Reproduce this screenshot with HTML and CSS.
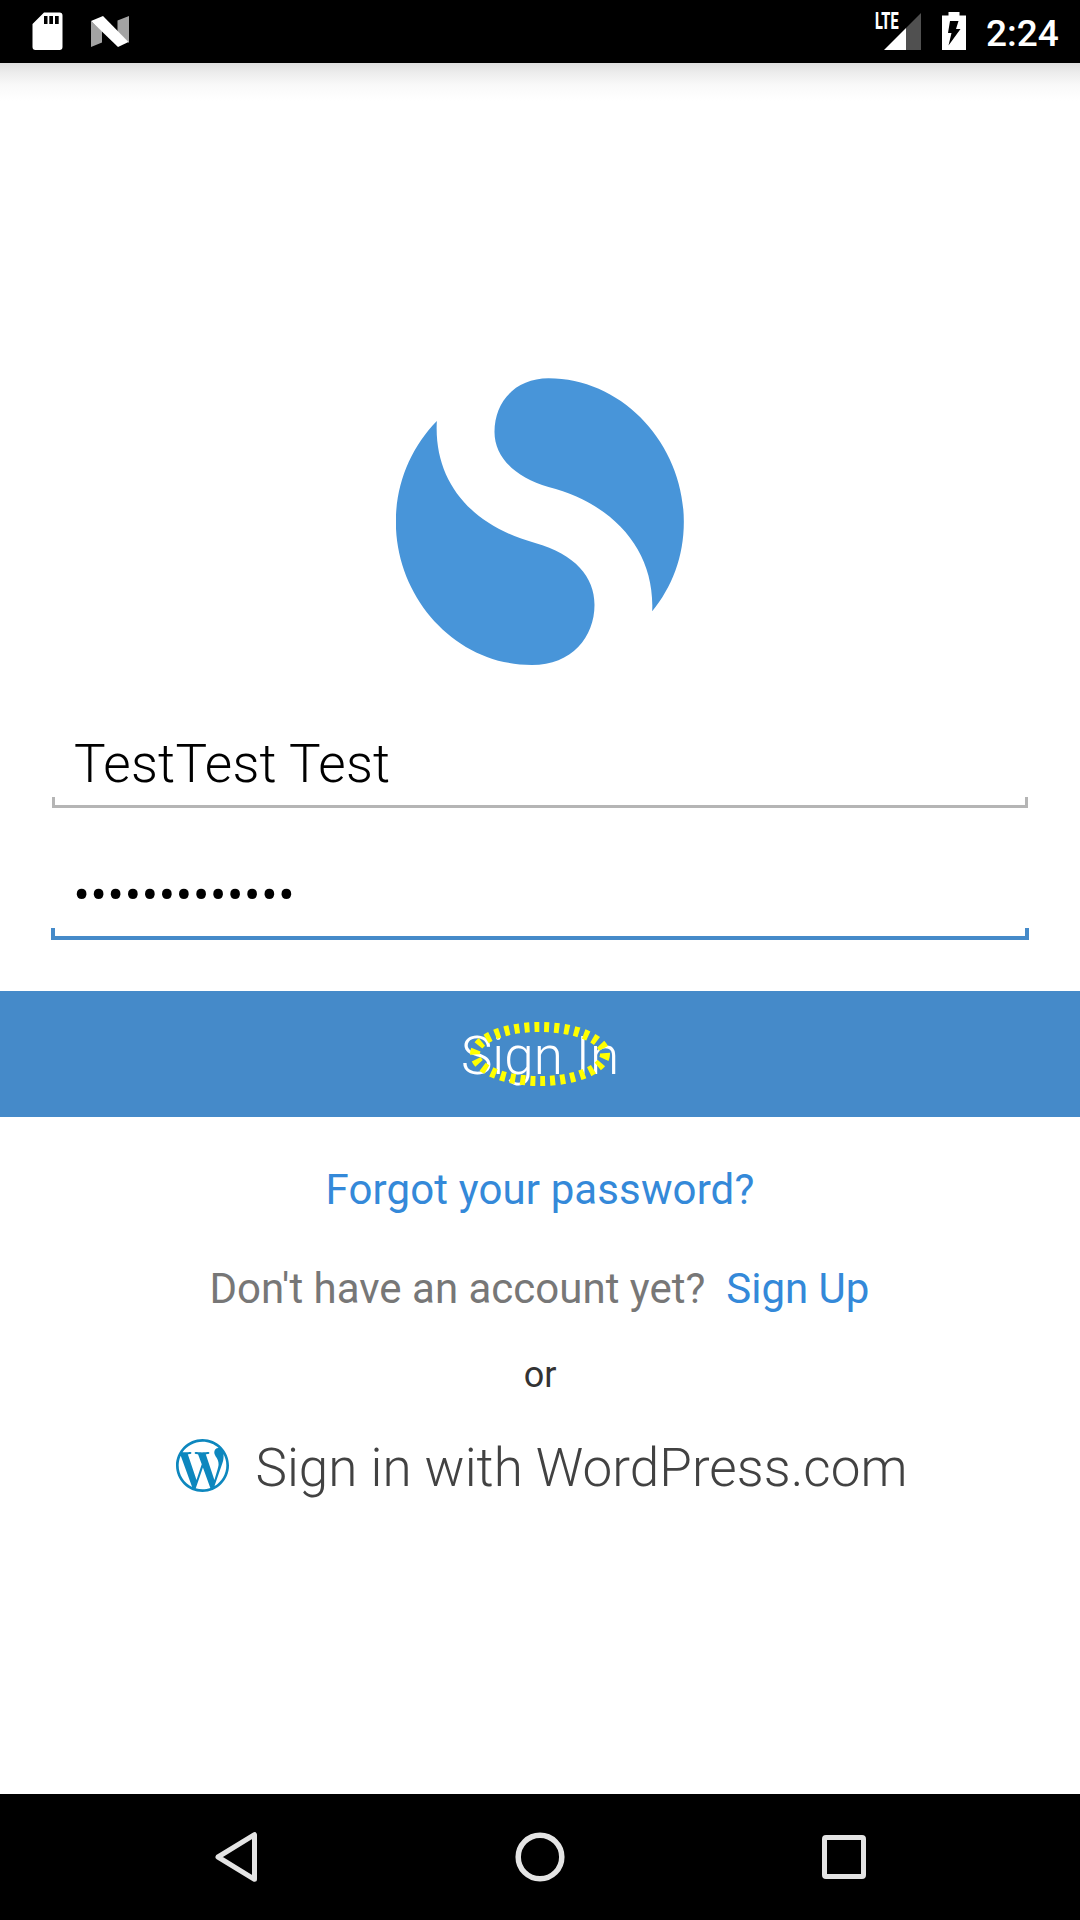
FILE: index.html
```html
<!DOCTYPE html>
<html lang="en">
<head>
<meta charset="utf-8">
<title>Sign In</title>
<link rel="stylesheet" href="styles.css">
</head>
<body>
<div class="screen">
  <header class="status-bar">
    <div class="status-left">
      <svg class="sd-icon" width="31" height="39" viewBox="0 0 31 39"><path fill="#fff" fill-rule="evenodd" d="M12 0.5H27.500Q30.500 0.500 30.500 3.500V35Q30.500 38 27.500 38H3.500Q0.500 38 0.500 35V12ZM12 4V12H15.500V4ZM17.300 4V12H21V4ZM23 4V12H26.700V4Z"/></svg>
      <svg class="n-icon" width="38" height="32" viewBox="0 0 38 32"><path fill="#a3a3a3" d="M0 5L11 15V26.500L0 31ZM26.500 4.500L38 0V27L26.500 16Z"/><path fill="#fff" d="M0 5L12 0L37.500 26L27 31Z"/></svg>
    </div>
    <div class="status-right">
      <div class="signal">
        <span class="lte">LTE</span>
        <svg width="37" height="37" viewBox="0 0 37 37"><path fill="#505050" d="M37 0V37H22V15Z"/><path fill="#fff" d="M22 15V37H0Z"/></svg>
      </div>
      <svg class="battery" width="24" height="38" viewBox="0 0 24 38"><path fill="#fff" d="M6.500 0H17.500V3.500H24V38H0V3.500H6.500Z"/><path fill="#000" d="M8 9H16.500L14 17H18.500L6.500 33.500L9.500 21H6Z"/></svg>
      <span class="clock">2:24</span>
    </div>
  </header>
  <main class="content">
    <svg class="logo" width="288" height="288" viewBox="47.500 53 864 864"><g fill="#4895d9"><path d="M505 54C730 54 911 255 911 484C911 590 875 680 816 753C825 570 700 430 505 380C405 352 343 290 343 215C343 120 410 54 505 54Z"/><path d="M455 914C228 914 47 714 47 484C47 370 92 262 170 182C160 370 280 498 465 548C585 582 643 650 643 733C643 830 575 914 455 914Z"/></g></svg>
    <div class="field"><span class="value">TestTest Test</span></div>
    <div class="field focused"><span class="value dots">•••••••••••••</span></div>
    <div class="sign-in">
      <span class="sign-in-label">Sign In</span>
      <svg class="touch-mark" width="142" height="66" viewBox="0 0 142 66"><ellipse cx="71" cy="33" rx="65" ry="27" fill="none" stroke="#ff0" stroke-width="10" stroke-dasharray="5 5"/></svg>
    </div>
    <a class="forgot">Forgot your password?</a>
    <div class="signup"><span class="question">Don't have an account yet?</span><a class="signup-link">Sign Up</a></div>
    <div class="or">or</div>
    <div class="wordpress">
      <svg width="53" height="53" viewBox="0 0 24 24"><path fill="#0d87be" d="M21.469 6.825c.84 1.537 1.318 3.3 1.318 5.175 0 3.979-2.156 7.456-5.363 9.325l3.295-9.527c.615-1.54.82-2.771.82-3.864 0-.405-.026-.78-.07-1.11m-7.981.105c.647-.03 1.232-.105 1.232-.105.582-.075.514-.93-.067-.899 0 0-1.755.135-2.88.135-1.064 0-2.85-.15-2.85-.15-.585-.03-.661.855-.075.885 0 0 .54.061 1.125.09l1.68 4.605-2.37 7.08L5.354 6.9c.649-.03 1.234-.1 1.234-.1.585-.075.516-.93-.065-.896 0 0-1.746.138-2.874.138-.2 0-.438-.008-.69-.015C4.911 3.15 8.235 1.215 12 1.215c2.809 0 5.365 1.072 7.286 2.833-.046-.003-.091-.009-.141-.009-1.06 0-1.812.923-1.812 1.914 0 .89.513 1.643 1.06 2.531.411.72.89 1.643.89 2.977 0 .915-.354 1.994-.821 3.479l-1.075 3.585-3.9-11.61.001.014zM12 22.784c-1.059 0-2.081-.153-3.048-.437l3.237-9.406 3.315 9.087c.024.053.05.101.078.149-1.12.393-2.325.609-3.582.609M1.211 12c0-1.564.336-3.05.935-4.39L7.29 21.709C3.694 19.96 1.212 16.271 1.211 12M12 0C5.385 0 0 5.385 0 12s5.385 12 12 12 12-5.385 12-12S18.615 0 12 0"/></svg>
      <span class="wordpress-label">Sign in with WordPress.com</span>
    </div>
  </main>
  <nav class="nav-bar">
    <svg width="42" height="50" viewBox="0 0 42 50"><path fill="none" stroke="#e4e4e4" stroke-width="5" stroke-linejoin="round" d="M39.500 2.700V47.300L3 25Z"/></svg>
    <svg width="50" height="50" viewBox="0 0 50 50"><circle cx="25" cy="25" r="21.800" fill="none" stroke="#e4e4e4" stroke-width="5.500"/></svg>
    <svg width="44" height="44" viewBox="0 0 44 44"><rect x="2.500" y="2.500" width="39" height="39" rx="1.500" fill="none" stroke="#e4e4e4" stroke-width="5"/></svg>
  </nav>
</div>
</body>
</html>
```
FILE: styles.css
```css
* { box-sizing: border-box; }
body { margin: 0; font-family: Roboto, sans-serif; background: #fff; }
svg { display: block; flex: none; }
.screen { width: 1080px; height: 1920px; display: flex; flex-direction: column; overflow: hidden; }
.status-bar { height: 63px; flex: none; background: #000; display: flex; justify-content: space-between; padding: 0 19px 0 32px; }
.status-left { display: flex; align-items: flex-start; gap: 28px; padding-top: 12px; }
.n-icon { margin-top: 4px; }
.status-right { display: flex; align-items: flex-start; padding-top: 12px; }
.signal { position: relative; width: 46px; padding: 1px 0 0 9px; margin-right: 21px; }
.lte { position: absolute; left: 0; top: 1px; color: #fff; font-size: 23px; font-weight: 800; line-height: 18px; transform: scaleX(.63); transform-origin: 0 0; }
.clock { width: 75px; margin-left: 20px; color: #fff; font-size: 37px; font-weight: 500; line-height: 43px; white-space: nowrap; }
.content { flex: 1; display: flex; flex-direction: column; align-items: center; padding-top: 315px; background: linear-gradient(#dedede, #ededed 10px, #f9f9f9 22px, #fff 38px) no-repeat #fff; }
.field { width: 976px; height: 88px; margin-top: 54px; padding: 0 22px; border-bottom: 3px solid #b5b5b5; position: relative; font-size: 53px; font-weight: 300; line-height: 88px; color: #000; white-space: nowrap; }
.field::before, .field::after { content: ""; position: absolute; bottom: 0; width: 3px; height: 8px; background: #b5b5b5; }
.field::before { left: 0; }
.field::after { right: 0; }
.value { letter-spacing: .25px; }
.dots { letter-spacing: -.1px; }
.focused { width: 978px; height: 92px; margin-top: 40px; padding-left: 22px; line-height: 94px; border-bottom: 4px solid #458ac9; }
.focused::before, .focused::after { width: 4px; background: #458ac9; }
.sign-in { width: 1080px; height: 126px; margin-top: 51px; background: #458ac9; position: relative; text-align: center; }
.sign-in-label { color: #fff; font-size: 53px; font-weight: 300; line-height: 130px; }
.touch-mark { position: absolute; left: 469px; top: 30px; }
.forgot { margin-top: 48px; font-size: 42px; line-height: 50px; letter-spacing: .12px; color: #3489d9; white-space: nowrap; }
.signup { margin-top: 49px; margin-right: 1px; display: flex; gap: 21px; font-size: 42px; line-height: 50px; color: #777; white-space: nowrap; }
.signup-link { color: #3489d9; }
.or { margin-top: 40px; font-size: 36px; line-height: 42px; color: #333; }
.wordpress { margin-top: 39px; margin-left: 4px; display: flex; align-items: center; gap: 26px; height: 60px; }
.wordpress-label { padding-top: 6px; color: #424242; font-size: 53px; font-weight: 300; line-height: 60px; letter-spacing: .05px; white-space: nowrap; }
.nav-bar { height: 126px; flex: none; background: #000; display: flex; align-items: center; justify-content: space-between; padding: 0 214px 0 215px; }
```
